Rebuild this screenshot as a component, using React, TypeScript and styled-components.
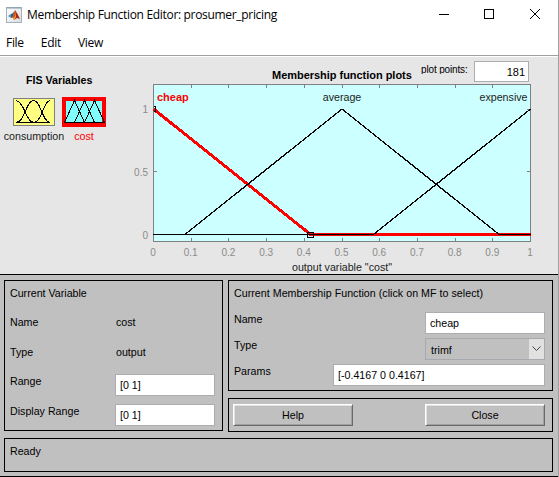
import React from "react";
import styled, { createGlobalStyle } from "styled-components";

const GlobalStyle = createGlobalStyle`
  * { box-sizing: border-box; }
  body { margin: 0; background: #fff; }
`;

const Window = styled.div`
  width: 559px;
  height: 477px;
  display: flex;
  flex-direction: column;
  overflow: hidden;
  background: #fff;
  border-right: 1px solid #a0a0a0;
  font: 10.67px/14px "Liberation Sans", Arial, sans-serif;
  color: #000;
`;

const TitleBar = styled.header`
  height: 30px;
  display: flex;
  align-items: center;
  padding-left: 6px;
`;

const Title = styled.h1`
  flex: 1;
  margin: 0 0 0 5px;
  font: 400 12px/16px "Open Sans", sans-serif;
  letter-spacing: -0.32px;
  white-space: nowrap;
`;

const WindowControls = styled.div`
  display: flex;
  padding: 0 18px 2px 0;
  gap: 35px;
  svg { display: block; }
  svg:last-child { margin-left: 1px; }
`;

const MenuBar = styled.nav`
  height: 26px;
  display: flex;
  gap: 17px;
  padding: 5px 0 0 6px;
  border-bottom: 1px solid #a0a0a0;
  font: 400 12px/16px "Open Sans", sans-serif;
`;

const MenuItem = styled.span`
  letter-spacing: -0.3px;
`;

const PlotArea = styled.section`
  height: 217px;
  margin-top: 1px;
  display: flex;
  background: #e6e6e6;
`;

const VariableColumn = styled.aside`
  width: 130px;
  padding-top: 16px;
`;

const VariableHeading = styled.h2`
  margin: 0 0 10px 26px;
  font-size: 10.67px;
  line-height: 14px;
`;

const VariableList = styled.div`
  display: flex;
`;

const Variable = styled.div<{ $width: number; $color?: string }>`
  width: ${(p) => p.$width}px;
  display: flex;
  flex-direction: column;
  align-items: center;
  color: ${(p) => p.$color ?? "#222"};
  svg { display: block; margin-bottom: 2px; }
  svg[height="28"] { margin: 1px 0 3px; }
`;

const ChartColumn = styled.div`
  width: 428px;
  display: flex;
  flex-direction: column;
`;

const ChartHeader = styled.div`
  height: 26px;
  display: flex;
  padding-left: 142px;
`;

const ChartTitle = styled.h2`
  width: 149px;
  margin: 11px 0 0;
  font-size: 11px;
  line-height: 14px;
  letter-spacing: -0.03px;
  white-space: nowrap;
`;

const PointsLabel = styled.label`
  width: 53px;
  height: 9px;
  margin: 8px 0 0;
  overflow: hidden;
  font-size: 10px;
  line-height: 10px;
  letter-spacing: -0.15px;
  white-space: nowrap;
`;

const Controls = styled.main`
  height: 203px;
  display: grid;
  grid-template-columns: 219px 325px;
  grid-template-rows: 111px 33px 34px;
  column-gap: 5px;
  row-gap: 7px;
  padding: 5px 5px 0 4px;
  background: #c0c0c0;
  border-top: 1px solid #000;
  border-bottom: 1px solid #000;
`;

const Panel = styled.section<{ $area: string }>`
  grid-area: ${(p) => p.$area};
  border: 1px solid #000;
  padding: 5px 0 0 5px;
`;

const PanelTitle = styled.div<{ $gap: number; $spacing?: number }>`
  height: 14px;
  margin-bottom: ${(p) => p.$gap}px;
  white-space: nowrap;
  letter-spacing: ${(p) => p.$spacing ?? 0}px;
`;

const Row = styled.div<{ $height: number }>`
  height: ${(p) => p.$height}px;
  display: flex;
  align-items: flex-start;
  justify-content: space-between;
  padding-right: 7px;
`;

const Value = styled.span`
  width: 99px;
`;

const Field = styled.input<{ $width: number }>`
  width: ${(p) => p.$width}px;
  height: 22px;
  flex: none;
  margin: 0;
  padding: 0 4px;
  border: 1px solid #abadb3;
  border-radius: 0;
  background: #fff;
  color: #000;
  font: inherit;
`;

const PointsField = styled(Field)`
  height: 21px;
  margin-top: 4px;
  padding-right: 3px;
  text-align: right;
  font-size: 11px;
`;

const Select = styled.div`
  width: 120px;
  height: 22px;
  display: flex;
  border: 1px solid #a8a9ae;
  padding-left: 5px;
  line-height: 22px;
`;

const SelectArrow = styled.span`
  width: 15px;
  height: 20px;
  margin-left: auto;
  display: grid;
  place-items: center;
  background: #e1e1e1;
`;

const ButtonPanel = styled(Panel)`
  display: flex;
  justify-content: space-between;
  margin-bottom: -1px;
  padding: 5px 7px 0 4px;
`;

const Button = styled.button`
  width: 120px;
  height: 22px;
  padding: 0;
  border: 1px solid;
  border-color: #fff #696969 #696969 #fff;
  background: #c0c0c0;
  box-shadow: inset 1px 1px #e3e3e3, inset -1px -1px #a0a0a0;
  color: #000;
  font: inherit;
`;

const AxisText = styled.text`
  font: 10px "Liberation Sans", Arial, sans-serif;
  fill: #8a8a8a;
`;

const CurveText = styled.text<{ $selected?: boolean }>`
  font: ${(p) => (p.$selected ? "bold 11px" : "normal 10.67px")} "Liberation Sans", Arial, sans-serif;
  fill: ${(p) => (p.$selected ? "#f00" : "#222")};
`;

const MatlabIcon = () => (
  <svg width="16" height="16" viewBox="0 0 16 16">
    <defs>
      <linearGradient id="sheet" x2="1" y2="1">
        <stop stopColor="#fff" />
        <stop offset="1" stopColor="#d9dde1" />
      </linearGradient>
    </defs>
    <rect x=".5" y=".5" width="15" height="15" fill="url(#sheet)" stroke="#a5b0b8" />
    <path d="M1 1h14" stroke="#7f9caf" />
    <path d="M2 9l3-2 2 1-2 3z" fill="#4697c4" />
    <path d="M5 7q2 0 4-4L7 10l-2 1z" fill="#315f86" />
    <path d="M5 11q2-1 4-8l2 5-3 4-2-2z" fill="#d84e18" />
    <path d="M9 3l1 5-2 5 3-2 3 1q-2-5-5-9z" fill="#a52d13" />
    <path d="M9 5v4l-2 3 1 1 2-3z" fill="#f39a28" />
  </svg>
);

const BellIcon = () => (
  <svg width="42" height="28" viewBox="0 0 42 28">
    <rect x=".5" y=".5" width="41" height="27" fill="#ffff80" stroke="#808080" />
    <g fill="none" stroke="#000" shapeRendering="crispEdges">
      <path d="M3 2.5C11 3 13 24.5 21 24.5S30 3 37 2.5" />
      <path d="M3 24.5C12 24 13 2.5 20.5 2.5S29 24 37 24.5" />
      <path d="M3 24.5H37" />
    </g>
  </svg>
);

const TriangleIcon = () => (
  <svg width="44" height="30" viewBox="0 0 44 30">
    <rect width="44" height="30" fill="#f00" />
    <rect x="4" y="4" width="36" height="22" fill="#80ffff" />
    <g fill="none" stroke="#000" shapeRendering="crispEdges">
      <path d="M2.5 25.5L12.5 3.5L22.5 25.5M12.5 25.5L22.5 3.5L32.5 25.5M22.5 25.5L32.5 3.5L42.5 25.5M2 25.5H43" />
    </g>
  </svg>
);

const ticks = Array.from({ length: 11 }, (_, i) => i);
const left = 23.5;
const span = 377;
const px = (v: number) => left + v * span;

const Chart = () => (
  <svg width="428" height="191" viewBox="0 0 428 191">
    <rect x="23.5" y="1.5" width="377" height="157" fill="#ccffff" stroke="#808080" />
    <g stroke="#808080" shapeRendering="crispEdges">
      {ticks.map((t) => (
        <path key={t} d={`M${px(t / 10)} 1v4M${px(t / 10)} 155v4`} />
      ))}
      {[26.5, 88.5, 151.5].map((y) => (
        <path key={y} d={`M23 ${y}h4M397 ${y}h4`} />
      ))}
    </g>
    {ticks.map((t) => (
      <AxisText key={t} x={px(t / 10) - 0.5} y="173" textAnchor="middle">{t === 10 ? "1" : t === 0 ? "0" : `0.${t}`}</AxisText>
    ))}
    <AxisText x="18" y="30" textAnchor="end">1</AxisText>
    <AxisText x="18" y="93" textAnchor="end">0.5</AxisText>
    <AxisText x="18" y="156" textAnchor="end">0</AxisText>
    <g fill="none" shapeRendering="crispEdges">
      <path d={`M23.5 26L${px(0.4167)} 151.5H401`} stroke="#f00" strokeWidth="3" />
      <path d={`M${px(0.0833)} 151.5L${px(0.5)} 26L${px(0.9167)} 151.5`} stroke="#000" strokeWidth="1.3" />
      <path d={`M${px(0.5833)} 151.5L400.5 26`} stroke="#000" strokeWidth="1.3" />
      <path d={`M23 151.5H${px(0.5833)}M${px(0.9167)} 151.5H401`} stroke="#000" />
      <path d="M24 23.5h1.5v5H24" stroke="#000" />
      <rect x="177.5" y="149.5" width="6" height="5" stroke="#000" />
    </g>
    <CurveText $selected x="27" y="18">cheap</CurveText>
    <CurveText x="212" y="18" textAnchor="middle">average</CurveText>
    <CurveText x="397.5" y="18" textAnchor="end">expensive</CurveText>
    <CurveText x="212" y="188" textAnchor="middle">output variable "cost"</CurveText>
  </svg>
);

export default function App() {
  return (
    <>
      <GlobalStyle />
      <Window>
        <TitleBar>
          <MatlabIcon />
          <Title>Membership Function Editor: prosumer_pricing</Title>
          <WindowControls>
            <svg width="10" height="10"><path d="M0 5.5h10" stroke="#000" /></svg>
            <svg width="10" height="10"><rect x=".5" y=".5" width="9" height="9" fill="none" stroke="#000" /></svg>
            <svg width="10" height="10"><path d="M0 0l10 10M10 0L0 10" stroke="#000" /></svg>
          </WindowControls>
        </TitleBar>
        <MenuBar>
          <MenuItem>File</MenuItem>
          <MenuItem>Edit</MenuItem>
          <MenuItem>View</MenuItem>
        </MenuBar>
        <PlotArea>
          <VariableColumn>
            <VariableHeading>FIS Variables</VariableHeading>
            <VariableList>
              <Variable $width={68}><BellIcon />consumption</Variable>
              <Variable $width={32} $color="#f00"><TriangleIcon />cost</Variable>
            </VariableList>
          </VariableColumn>
          <ChartColumn>
            <ChartHeader>
              <ChartTitle>Membership function plots</ChartTitle>
              <PointsLabel>plot points:</PointsLabel>
              <PointsField $width={55} defaultValue="181" />
            </ChartHeader>
            <Chart />
          </ChartColumn>
        </PlotArea>
        <Controls>
          <Panel $area="1 / 1 / 3 / 2">
            <PanelTitle $gap={15}>Current Variable</PanelTitle>
            <Row $height={30}>Name<Value>cost</Value></Row>
            <Row $height={29}>Type<Value>output</Value></Row>
            <Row $height={30}>Range<Field $width={100} defaultValue="[0 1]" /></Row>
            <Row $height={22}>Display Range<Field $width={100} defaultValue="[0 1]" /></Row>
          </Panel>
          <Panel $area="1 / 2 / 2 / 3">
            <PanelTitle $gap={12} $spacing={0.03}>Current Membership Function (click on MF to select)</PanelTitle>
            <Row $height={26}>Name<Field $width={120} defaultValue="cheap" /></Row>
            <Row $height={26}>
              Type
              <Select>
                trimf
                <SelectArrow>
                  <svg width="9" height="6"><path d="M.5 .5l4 4 4-4" fill="none" stroke="#444" /></svg>
                </SelectArrow>
              </Select>
            </Row>
            <Row $height={22}>Params<Field $width={212} defaultValue="[-0.4167 0 0.4167]" /></Row>
          </Panel>
          <ButtonPanel $area="2 / 2 / 3 / 3">
            <Button>Help</Button>
            <Button>Close</Button>
          </ButtonPanel>
          <Panel $area="3 / 1 / 4 / 3">Ready</Panel>
        </Controls>
      </Window>
    </>
  );
}
